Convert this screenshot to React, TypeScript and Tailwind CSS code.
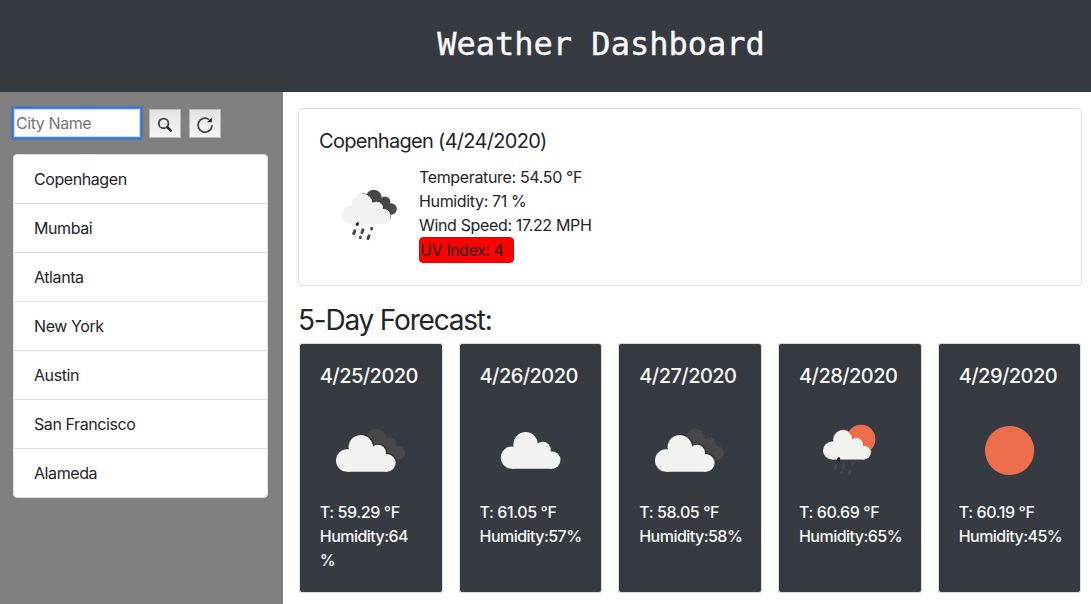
import React from "react";

type IconKind = "broken" | "cloud" | "rain" | "sunRain" | "sun";

interface Day {
  date: string;
  icon: IconKind;
  temp: string;
  humidity: string;
}

const cities = ["Copenhagen", "Mumbai", "Atlanta", "New York", "Austin", "San Francisco", "Alameda"];

const days: Day[] = [
  { date: "4/25/2020", icon: "broken", temp: "59.29", humidity: "64 %" },
  { date: "4/26/2020", icon: "cloud", temp: "61.05", humidity: "57%" },
  { date: "4/27/2020", icon: "broken", temp: "58.05", humidity: "58%" },
  { date: "4/28/2020", icon: "sunRain", temp: "60.69", humidity: "65%" },
  { date: "4/29/2020", icon: "sun", temp: "60.19", humidity: "45%" },
];

function CloudShape() {
  return (
    <>
      <circle cx="27.2" cy="60.5" r="11.2" />
      <circle cx="40.8" cy="47.2" r="12.2" />
      <circle cx="58" cy="52.7" r="8" />
      <circle cx="66.9" cy="62.9" r="8.8" />
      <path d="M27.2 71.7V50l14-4 17 3 9 10v12.7z" />
    </>
  );
}

function LightCloud({ edge }: { edge?: string }) {
  return (
    <>
      {edge && (
        <g fill={edge} transform="translate(1.1 -0.6)">
          <circle cx="40.8" cy="47.2" r="12.2" />
          <circle cx="58" cy="52.7" r="8" />
          <circle cx="66.9" cy="62.4" r="8.5" />
        </g>
      )}
      <g fill="#f2f2f0">
        <CloudShape />
      </g>
    </>
  );
}

function DarkCloud() {
  return (
    <g fill="#48484a">
      <circle cx="56.2" cy="38.5" r="9.8" />
      <circle cx="70.3" cy="44" r="6.7" />
      <circle cx="77.9" cy="52.9" r="7.1" />
      <path d="M56 36l14 4 8 8v12l-18-8z" />
    </g>
  );
}

function Rain() {
  return (
    <g stroke="#48484a" strokeLinecap="round" fill="none">
      <path d="M38.6 58.6l-.5 1" stroke="#1c1c1e" strokeWidth="2.8" />
      <path d="M35.8 65.8l-1.1 2.8M44 64.8l-1.1 2.8M50.1 70.8l-1.1 2.8" strokeWidth="3" />
      <path d="M52.8 63.3l-.3.8M41.5 72l-.3.8" strokeWidth="2.8" />
    </g>
  );
}

function WeatherIcon({ kind }: { kind: IconKind }) {
  return (
    <svg className="block h-[100px] w-[100px] shrink-0" viewBox="0 0 100 100" aria-hidden="true">
      {kind === "broken" && (
        <>
          <DarkCloud />
          <LightCloud edge="#242426" />
        </>
      )}
      {kind === "cloud" && (
        <g transform="translate(4.8 -2.9)">
          <LightCloud />
        </g>
      )}
      {kind === "rain" && (
        <>
          <g transform="translate(9.8 1.7) scale(0.8)">
            <DarkCloud />
            <g transform="translate(1.4 -0.8)">
              <LightCloud edge="#242426" />
            </g>
            <g transform="translate(0.7 -0.4)">
              <LightCloud edge="#ffffff" />
            </g>
            <LightCloud />
          </g>
          <Rain />
        </>
      )}
      {kind === "sunRain" && (
        <>
          <circle cx="62" cy="39.2" r="14.4" fill="#ec6e4c" />
          <g transform="translate(11.2 2.1) scale(0.8)">
            <LightCloud edge="#f4552f" />
          </g>
          <g transform="translate(1.2 0)">
            <Rain />
          </g>
        </>
      )}
      {kind === "sun" && <circle cx="50.6" cy="50.5" r="24.6" fill="#ec6e4c" />}
    </svg>
  );
}

function IconButton({ label, children }: { label: string; children: React.ReactNode }) {
  return (
    <button
      aria-label={label}
      className="flex h-[29px] w-8 items-center justify-center border border-[#b9b9b9] bg-linear-to-b from-[#e4e4e4] to-[#f5f5f5]"
    >
      {children}
    </button>
  );
}

function Sidebar() {
  return (
    <aside className="w-[283px] shrink-0 bg-[#808080] pl-[13px] pt-4">
      <div className="flex h-[30px] items-center">
        <input
          placeholder="City Name"
          className="h-[30px] w-[128px] border border-[#4a8df0] bg-white px-0.5 text-base tracking-[-0.42px] shadow-[0_0_0_1px_#2f72d4,0_0_2px_1px_#2f6fca,inset_0_0_0_1px_#c5dafb] outline-none placeholder:text-[#757575]"
        />
        <div className="ml-2 flex gap-2">
          <IconButton label="Search">
            <svg width="16" height="16" viewBox="0 0 16 16" fill="none" className="mt-[3px]" aria-hidden="true">
              <circle cx="6.6" cy="6.4" r="4.8" stroke="#444" strokeWidth="1.8" />
              <path d="M10.2 10.2l3.7 3.5" stroke="#222" strokeWidth="2.4" strokeLinecap="round" />
            </svg>
          </IconButton>
          <IconButton label="Refresh">
            <svg width="18" height="18" viewBox="0 0 18 18" fill="none" className="mt-[3px]" aria-hidden="true">
              <path d="M13.2 3.6A7 7 0 1 0 16 9.2" stroke="#444" strokeWidth="1.8" />
              <path d="M15.8 1.4v4.8H11z" fill="#222" />
            </svg>
          </IconButton>
        </div>
      </div>
      <ul className="mt-4 w-[255px] divide-y divide-[#dfdfdf] rounded border border-[#dfdfdf] bg-white">
        {cities.map((city) => (
          <li key={city} className="flex h-[49px] items-center px-5 tracking-[-0.42px] last:h-12">
            {city}
          </li>
        ))}
      </ul>
    </aside>
  );
}

function CurrentWeather() {
  return (
    <section className="h-[178px] rounded border border-[#dfdfdf] p-5">
      <h5 className="mb-3 text-xl leading-6 tracking-[-0.7px]">Copenhagen (4/24/2020)</h5>
      <div className="flex">
        <WeatherIcon kind="rain" />
        <div className="leading-6">
          <p className="tracking-[-0.35px]">Temperature: 54.50 °F</p>
          <p className="tracking-[-0.35px]">Humidity: 71 %</p>
          <p className="tracking-[-0.35px]">Wind Speed: 17.22 MPH</p>
          <p className="h-[26px] w-[95px] rounded border border-[#e60000] bg-[#ff0000] tracking-[-0.42px]">
            UV Index: 4
          </p>
        </div>
      </div>
    </section>
  );
}

function ForecastCard({ day }: { day: Day }) {
  return (
    <article className="h-[250px] min-w-0 flex-1 rounded-[3px] border border-[#dcdddf] bg-[#363a41] p-5 font-[450] text-[#f8f9fa]">
      <h5 className="mb-3 whitespace-nowrap text-xl leading-6 tracking-[-0.55px]">{day.date}</h5>
      <WeatherIcon kind={day.icon} />
      <p className="whitespace-nowrap leading-6 tracking-[-0.4px]">{`T: ${day.temp} °F`}</p>
      <p className="leading-6 tracking-[-0.53px]">{`Humidity:${day.humidity}`}</p>
    </article>
  );
}

export default function App() {
  return (
    <div className="flex h-[604px] w-full flex-col overflow-hidden bg-white font-['Inter','Liberation_Sans',sans-serif] text-base text-[#212529]">
      <header className="flex h-[92px] shrink-0 justify-center bg-[#363a41] pl-[111px] pt-[25px] text-[#f8f9fa]">
        <h1 className="font-['DejaVu_Sans_Mono',monospace] text-[32px] leading-[38px] [-webkit-text-stroke:0.4px_#f8f9fa]">
          Weather Dashboard
        </h1>
      </header>
      <div className="flex min-h-0 flex-1">
        <Sidebar />
        <main className="min-w-0 flex-1 pl-[15px] pr-[9px] pt-4">
          <CurrentWeather />
          <h3 className="mb-1.5 mt-[18px] text-[28px] leading-[33px] tracking-[-1.2px]">5-Day Forecast:</h3>
          <div className="flex gap-4 pl-[0.78px] pr-[0.55px]">
            {days.map((day) => (
              <ForecastCard key={day.date} day={day} />
            ))}
          </div>
        </main>
      </div>
    </div>
  );
}
